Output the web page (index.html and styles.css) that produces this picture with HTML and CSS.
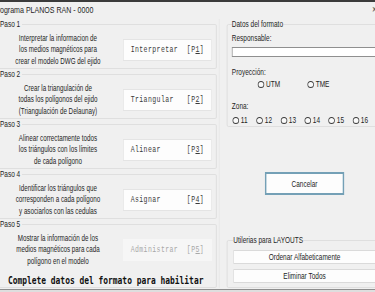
FILE: index.html
```html
<!DOCTYPE html>
<html lang="es">
<head>
  <meta charset="UTF-8">
  <meta name="viewport" content="width=device-width, initial-scale=1.0">
  <title>Programa PLANOS RAN - 0000</title>
  <link rel="stylesheet" href="styles.css">
</head>
<body>
  <div class="window">
    <div class="topbar"></div>
    <div class="titlebar">
      <span class="title">Programa PLANOS RAN - 0000</span>
      <span class="close">×</span>
    </div>

    <div class="main">
      <div class="steps">
        <fieldset class="step">
          <legend>Paso 1</legend>
          <div class="step-row">
            <p class="desc">Interpretar la informacion de<br>los medios magnéticos para<br>crear el modelo DWG del ejido</p>
            <button class="step-btn">Interpretar  [P<u>1</u>]</button>
          </div>
        </fieldset>

        <fieldset class="step">
          <legend>Paso 2</legend>
          <div class="step-row">
            <p class="desc">Crear la triangulación de<br>todas los polígonos del ejido<br>(Triangulación de Delaunay)</p>
            <button class="step-btn">Triangular   [P<u>2</u>]</button>
          </div>
        </fieldset>

        <fieldset class="step">
          <legend>Paso 3</legend>
          <div class="step-row">
            <p class="desc">Alinear correctamente todos<br>los triángulos con los límites<br>de cada polígono</p>
            <button class="step-btn">Alinear      [P<u>3</u>]</button>
          </div>
        </fieldset>

        <fieldset class="step">
          <legend>Paso 4</legend>
          <div class="step-row">
            <p class="desc">Identificar los triángulos que<br>corresponden a cada polígono<br>y asociarlos con las cedulas</p>
            <button class="step-btn">Asignar      [P<u>4</u>]</button>
          </div>
        </fieldset>

        <fieldset class="step last">
          <legend>Paso 5</legend>
          <div class="step-row">
            <p class="desc">Mostrar la información de los<br>medios magnéticos para cada<br>polígono en el modelo</p>
            <button class="step-btn" disabled>Administrar  [P<u>5</u>]</button>
          </div>
          <p class="notice">Complete datos del formato para habilitar</p>
        </fieldset>
      </div>

      <div class="side">
        <fieldset class="format">
          <legend>Datos del formato</legend>
          <div class="label">Responsable:</div>
          <input type="text" class="field">

          <div class="label spaced">Proyección:</div>
          <div class="radios proj">
            <label><input type="radio" name="proy">UTM</label>
            <label><input type="radio" name="proy">TME</label>
          </div>

          <div class="label zone-title">Zona:</div>
          <div class="radios zones">
            <label><input type="radio" name="zona">11</label>
            <label><input type="radio" name="zona">12</label>
            <label><input type="radio" name="zona">13</label>
            <label><input type="radio" name="zona">14</label>
            <label><input type="radio" name="zona">15</label>
            <label><input type="radio" name="zona">16</label>
          </div>
        </fieldset>

        <button class="cancel">Cancelar</button>

        <fieldset class="layouts">
          <legend>Utilerias para LAYOUTS</legend>
          <button class="tool-btn">Ordenar Alfabeticamente</button>
          <button class="tool-btn">Eliminar Todos</button>
        </fieldset>
      </div>
    </div>

    <div class="statusbar"></div>
  </div>
</body>
</html>
```

FILE: styles.css
```css
html, body {
  margin: 0;
  overflow: hidden;
  background: #f0f0f0;
}
body {
  font-family: "Liberation Sans", Arial, sans-serif;
  font-size: 9px;
  color: #1e1e1e;
}
/* the form is drawn narrow, so lay it out wide and squeeze it */
.window {
  width: 530px;
  transform: scaleX(0.72);
  transform-origin: 0 0;
}
.topbar {
  height: 2px;
  background: #3b3b3b;
}
.titlebar {
  height: 15px;
  display: flex;
  align-items: center;
  justify-content: space-between;
}
.title {
  font-size: 9.8px;
  margin-left: -9.8px;
}
.close {
  font-size: 10px;
  margin-right: 7px;
  color: #333;
}
.main {
  display: flex;
  padding-top: 2px;
}
fieldset {
  margin: 0;
  border: 1px solid #dcdcdc;
  border-radius: 2px;
  min-width: 0;
  box-sizing: border-box;
}
legend {
  padding: 0 2px;
  font-size: 9px;
  line-height: 10px;
}
.steps {
  margin-left: -11px;
  width: 312px;
  padding-right: 3px;
  border-right: 1px solid #e6e6e6;
}
.step {
  padding: 3.5px 6px 1px 8px;
}
.step.last {
  padding-bottom: 0;
}
.step-row {
  display: flex;
  align-items: center;
  gap: 8px;
}
.desc {
  margin: 0;
  width: 165px;
  text-align: center;
  font-size: 8.7px;
  line-height: 11.5px;
  white-space: nowrap;
}
.step-btn {
  width: 123px;
  height: 22px;
  padding: 0;
  background: #fdfdfd;
  border: 1px solid #e4e4e4;
  font-family: "Liberation Mono", "DejaVu Sans Mono", monospace;
  font-size: 9px;
  letter-spacing: 0.6px;
  color: #3a3a3a;
  white-space: pre;
}
.step-btn:disabled {
  background: #f6f6f6;
  border-color: #f6f6f6;
  color: #a8a8a8;
}
.notice {
  margin: 8px 0 0 13px;
  font-family: "DejaVu Sans Mono", "Liberation Mono", monospace;
  font-weight: bold;
  font-size: 11px;
  line-height: 12px;
  white-space: nowrap;
  color: #111;
}
.side {
  margin-left: 10px;
  width: 215px;
  display: flex;
  flex-direction: column;
  align-items: flex-start;
}
.side legend {
  padding: 0;
}
.format {
  width: 215px;
  padding: 3.5px 6px 1px 6px;
}
.label {
  line-height: 11px;
}
.label.spaced {
  margin-top: 9.5px;
}
.label.zone-title {
  margin-top: 11.5px;
}
.field {
  display: block;
  width: 100%;
  height: 10px;
  box-sizing: border-box;
  margin: 3.5px 0 0;
  padding: 0;
  border: 1px solid #8f8f8f;
  background: #fff;
}
.radios {
  display: flex;
  align-items: center;
  height: 10px;
}
.radios label {
  display: flex;
  align-items: center;
  gap: 2.5px;
}
.radios input {
  appearance: none;
  width: 9px;
  height: 7px;
  margin: 0;
  border: 1px solid #3c3c3c;
  border-radius: 50%;
  background: #fafafa;
}
.proj {
  margin-top: 1.5px;
  padding-left: 36px;
}
.proj label {
  width: 69px;
}
.zones {
  margin-top: 3.5px;
  padding-left: 1px;
}
.zones label {
  width: 34px;
}
.cancel {
  margin: 45px 0 0 53px;
  width: 110px;
  height: 23px;
  padding: 0;
  background: #fdfdfd;
  border: 2px solid #74a0b6;
  font-family: "Liberation Sans", Arial, sans-serif;
  font-size: 9px;
  color: #1e1e1e;
}
.layouts {
  margin-top: 40px;
  width: 215px;
  padding: 5px 7px 4px 8px;
}
.tool-btn {
  display: block;
  width: 100%;
  height: 14px;
  padding: 0;
  background: #fdfdfd;
  border: 1px solid #dadada;
  font-family: "Liberation Sans", Arial, sans-serif;
  font-size: 9px;
  color: #1e1e1e;
}
.tool-btn + .tool-btn {
  margin-top: 5px;
}
.statusbar {
  margin-top: 1px;
  height: 3px;
  border-top: 1px solid #8e8e8e;
  background: #dedede;
}
```
